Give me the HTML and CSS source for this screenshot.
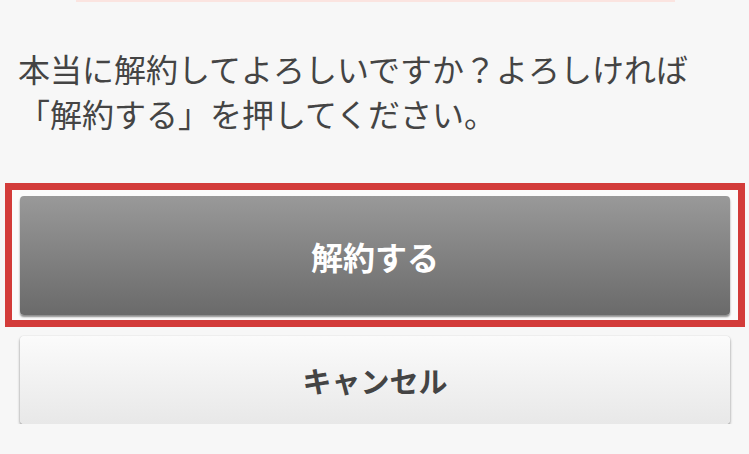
FILE: index.html
```html
<!DOCTYPE html>
<html lang="ja">
<head>
    <meta charset="UTF-8">
    <meta name="viewport" content="width=device-width, initial-scale=1.0">
    <title>解約の確認</title>
    <link rel="stylesheet" href="styles.css">
</head>
<body>
    <div class="top-line"></div>
    <p class="message">本当に解約してよろしいですか？よろしければ<br>「解約する」を押してください。</p>
    <div class="highlight">
        <button type="button" class="btn btn-primary">解約する</button>
    </div>
    <div class="cancel-wrap">
        <button type="button" class="btn btn-cancel">キャンセル</button>
    </div>
</body>
</html>
```

FILE: styles.css
```css
body {
    margin: 0;
    background-color: #f7f7f7;
    font-family: "Noto Sans CJK JP", "Noto Sans", sans-serif;
}
.top-line {
    height: 2px;
    margin: 0 74px 0 76px;
    background-color: #fbe4e0;
}
.message {
    margin: 44px 0 0;
    padding-left: 18px;
    font-size: 32px;
    line-height: 45px;
    color: #444444;
}
.highlight {
    margin: 47px 4px 0 5px;
    padding: 6px 8px 5px;
    border: 7px solid #d33c3a;
    background-color: #fbfbfb;
}
.btn {
    display: block;
    width: 100%;
    border: none;
    border-radius: 4px;
    font-family: "Noto Sans CJK JP", "Noto Sans", sans-serif;
    font-weight: bold;
    cursor: pointer;
}
.btn-primary {
    height: 119px;
    font-size: 32px;
    color: #ffffff;
    background: linear-gradient(to bottom, #999999, #6a6a6a);
    box-shadow: 0 2px 2px rgba(0, 0, 0, 0.45);
}
.cancel-wrap {
    margin: 9px 19px 0 20px;
}
.btn-cancel {
    height: 88px;
    font-size: 29px;
    color: #444444;
    background: linear-gradient(to bottom, #fbfbfb, #e8e8e8);
    box-shadow: 0 0 1px rgba(0, 0, 0, 0.25), 0 2px 3px rgba(0, 0, 0, 0.4);
}
```
